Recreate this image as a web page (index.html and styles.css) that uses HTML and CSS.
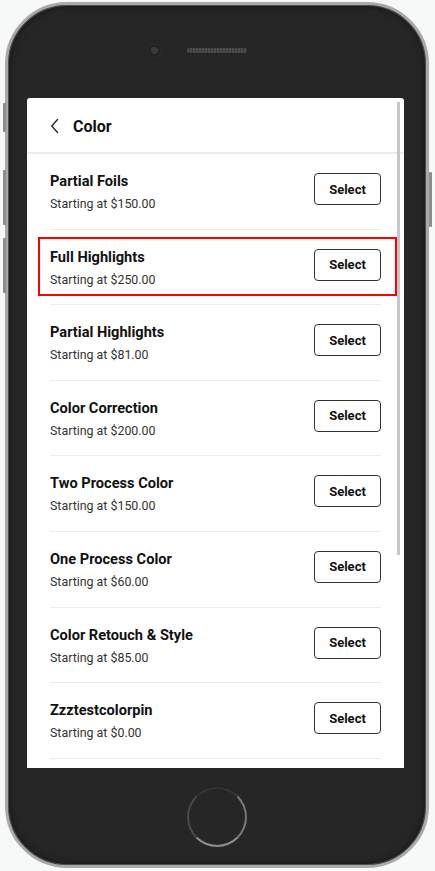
FILE: index.html
```html
<!DOCTYPE html>
<html lang="en">
<head>
<meta charset="utf-8">
<title>Color</title>
<link rel="stylesheet" href="styles.css">
</head>
<body>
<div class="phone">
  <span class="side-btn side-btn-1"></span>
  <span class="side-btn side-btn-2"></span>
  <span class="side-btn side-btn-3"></span>
  <span class="side-btn side-btn-r"></span>
  <div class="top-bezel">
    <span class="camera"></span>
    <span class="speaker"></span>
  </div>
  <div class="screen">
    <header class="header">
      <svg class="back" width="10" height="16" viewBox="0 0 10 16"><path d="M7.5 1.5 L1.8 8 L7.5 14.5" fill="none" stroke="#2a2a2a" stroke-width="1.4" stroke-linecap="round" stroke-linejoin="round"/></svg>
      <h1 class="title">Color</h1>
    </header>
    <ul class="list">
      <li class="row"><div class="info"><div class="name">Partial Foils</div><div class="price">Starting at $150.00</div></div><button class="select">Select</button></li>
      <li class="row"><div class="info"><div class="name">Full Highlights</div><div class="price">Starting at $250.00</div></div><button class="select">Select</button><span class="highlight"></span></li>
      <li class="row"><div class="info"><div class="name">Partial Highlights</div><div class="price">Starting at $81.00</div></div><button class="select">Select</button></li>
      <li class="row"><div class="info"><div class="name">Color Correction</div><div class="price">Starting at $200.00</div></div><button class="select">Select</button></li>
      <li class="row"><div class="info"><div class="name">Two Process Color</div><div class="price">Starting at $150.00</div></div><button class="select">Select</button></li>
      <li class="row"><div class="info"><div class="name">One Process Color</div><div class="price">Starting at $60.00</div></div><button class="select">Select</button></li>
      <li class="row"><div class="info"><div class="name">Color Retouch &amp; Style</div><div class="price">Starting at $85.00</div></div><button class="select">Select</button></li>
      <li class="row"><div class="info"><div class="name">Zzztestcolorpin</div><div class="price">Starting at $0.00</div></div><button class="select">Select</button></li>
    </ul>
    <span class="scrollbar"></span>
  </div>
  <div class="bottom-bezel">
    <span class="home"></span>
  </div>
</div>
</body>
</html>
```
FILE: styles.css
```css
html, body {
  margin: 0;
  padding: 0;
  background: #f7f8f8;
}
body {
  font-family: Roboto, "Liberation Sans", Arial, sans-serif;
  overflow: hidden;
}
.phone {
  position: relative;
  box-sizing: border-box;
  width: 424px;
  height: 866px;
  margin: 2px 0 0 5px;
  border: 3px solid #a9a9a9;
  border-radius: 62px;
  background: #262626;
  box-shadow: inset 0 0 0 1px #4d4d4d, inset 0 0 8px rgba(0,0,0,0.6);
  display: flex;
  flex-direction: column;
}
.side-btn {
  position: absolute;
  width: 3px;
  background: #8c8c8c;
  border-radius: 1px;
}
.side-btn-1 { left: -5px; top: 98px; height: 29px; }
.side-btn-2 { left: -5px; top: 165px; height: 55px; }
.side-btn-3 { left: -5px; top: 233px; height: 55px; }
.side-btn-r { right: -6px; top: 167px; height: 55px; }

.top-bezel {
  height: 93px;
  box-sizing: border-box;
  padding: 0 0 3px 143px;
  display: flex;
  align-items: center;
  gap: 29px;
}
.camera {
  width: 7px;
  height: 7px;
  border-radius: 50%;
  background: #3a3a3e;
  box-shadow: 0 0 0 2px #222226, 0 0 4px 3px #2c2c2c;
}
.speaker {
  width: 60px;
  height: 5px;
  border-radius: 3px;
  background: repeating-linear-gradient(90deg, #4a4a4a 0 2px, #3c3c3c 2px 3px);
}
.screen {
  position: relative;
  margin-left: 19px;
  width: 377px;
  height: 670px;
  background: #fff;
  border-radius: 3px 3px 0 0;
  overflow: hidden;
}
.header {
  box-sizing: border-box;
  height: 56px;
  padding: 2px 0 0 23px;
  border-bottom: 2px solid #ececec;
  display: flex;
  align-items: center;
  gap: 13px;
}
.back { display: block; }
.title {
  margin: 0;
  font-size: 16px;
  font-weight: 700;
  color: #111;
}
.list {
  list-style: none;
  margin: 0;
  padding: 0 23px;
}
.row {
  position: relative;
  box-sizing: border-box;
  height: 75.6px;
  padding-top: 18px;
  border-bottom: 1px solid #ebebeb;
  display: flex;
  justify-content: space-between;
  align-items: flex-start;
}
.name {
  font-size: 14.6px;
  line-height: 19px;
  font-weight: 700;
  color: #111;
}
.price {
  margin-top: 4px;
  font-size: 12.4px;
  line-height: 18px;
  color: #333;
}
.select {
  margin-top: 1px;
  width: 67px;
  height: 32px;
  box-sizing: border-box;
  border: 1px solid #333;
  border-radius: 4px;
  background: #fff;
  font-family: Roboto, "Liberation Sans", Arial, sans-serif;
  font-size: 13px;
  font-weight: 700;
  color: #111;
  padding: 0;
}
.highlight {
  position: absolute;
  top: 7px;
  bottom: 8px;
  left: -12px;
  right: -16px;
  border: 2px solid #f00;
}
.scrollbar {
  position: absolute;
  right: 4px;
  top: 4px;
  width: 3px;
  height: 453px;
  background: #c6c6c6;
}
.bottom-bezel {
  flex: 1;
  display: flex;
  justify-content: center;
  padding-top: 19px;
}
.home {
  box-sizing: border-box;
  width: 60px;
  height: 60px;
  border-radius: 50%;
  border: 2px solid;
  border-color: #333 #7a7a7a #8e8e8e #4a4a4a;
}
```
